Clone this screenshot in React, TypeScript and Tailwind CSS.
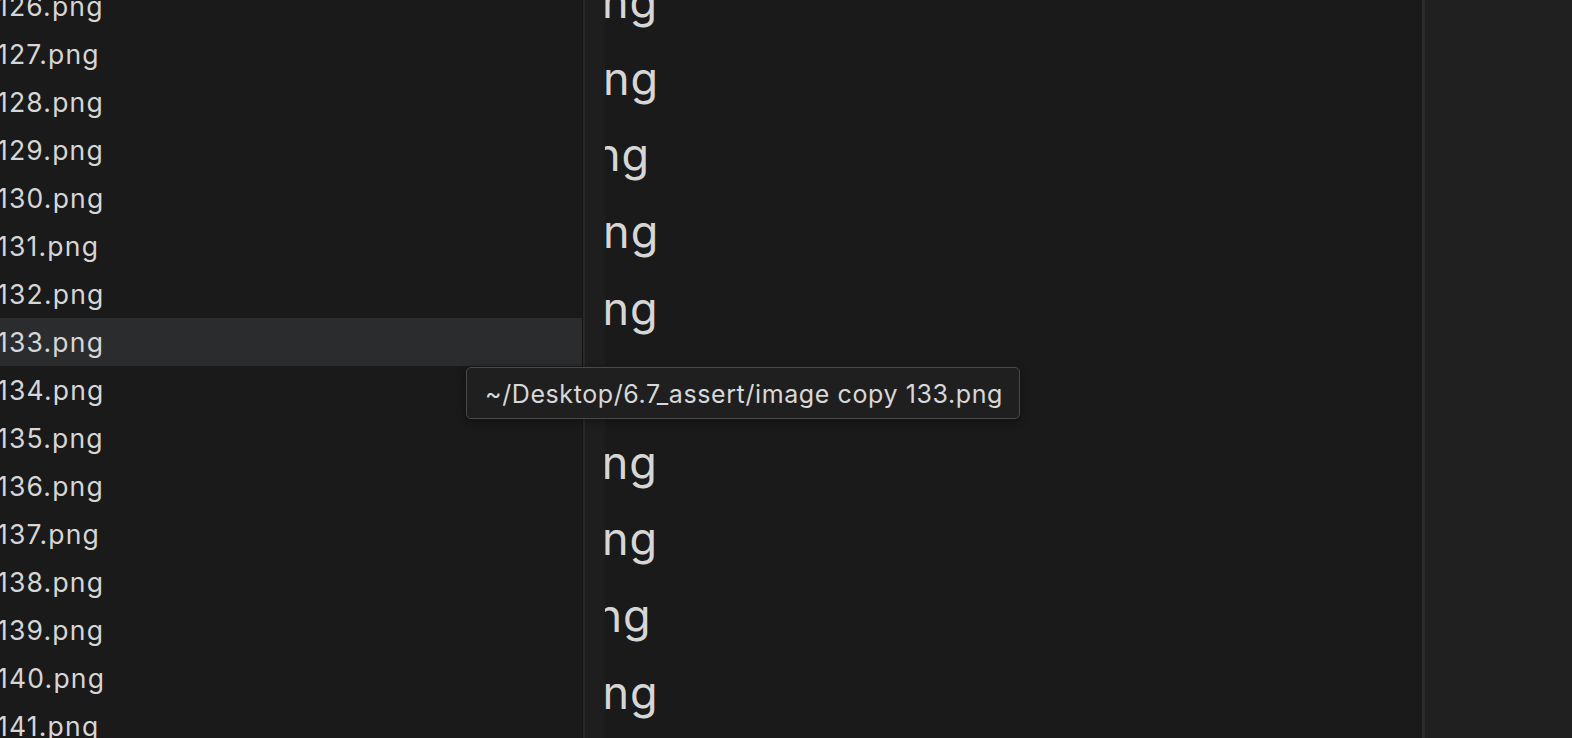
import React from "react";

const leftItems = Array.from({ length: 16 }, (_, i) => 126 + i);
const midItems = Array.from({ length: 11 }, (_, i) => 129 + i);

export default function App() {
  return (
    <div
      className="relative flex h-[738px] w-[1572px] overflow-hidden bg-[#1a1a1a] text-[#d6d6d6]"
      style={{ fontFamily: "Inter, 'Noto Sans', sans-serif" }}
    >
      {/* left list */}
      <div className="relative w-[582px] shrink-0 overflow-hidden bg-[#1a1a1a]">
        <div className="mt-[-18px] flex flex-col">
          {leftItems.map((n) => (
            <div
              key={n}
              className={`flex h-[48px] items-center ${n === 133 ? "bg-[#2b2c2e]" : ""}`}
            >
              <span className="ml-[-3px] mt-[1px] whitespace-nowrap text-[26.5px] leading-none tracking-[1.2px]">
                {n}.png
              </span>
            </div>
          ))}
        </div>
      </div>
      {/* divider */}
      <div className="w-px shrink-0 bg-[#141414]" />
      <div className="w-[2px] shrink-0 bg-[#2a2a2a]" />
      {/* gutter strip */}
      <div className="w-[20px] shrink-0 bg-[#1e1e1e]" />
      {/* middle */}
      <div className="relative w-[817px] shrink-0 overflow-hidden bg-[#1a1a1a]">
        <div className="mt-[-37px] flex flex-col">
          {midItems.map((n) => (
            <div key={n} className="flex h-[76.8px] items-center">
              <span className="ml-[-121px] whitespace-nowrap text-[45px] leading-none tracking-[1px]">
                {n}.png
              </span>
            </div>
          ))}
        </div>
      </div>
      {/* right divider */}
      <div className="w-[3px] shrink-0 bg-[#2c2c2c]" />
      <div className="flex-1 bg-[#202020]" />

      {/* tooltip */}
      <div className="absolute left-[466px] top-[367px] flex h-[52px] w-[554px] items-center rounded-[5px] border border-[#4a4a4a] bg-[#1f1f1f] pl-[18px] shadow-[0_2px_8px_rgba(0,0,0,0.4)]">
        <span className="mt-[2px] whitespace-nowrap text-[25px] leading-none tracking-[0.6px] text-[#d8d8d8]">
          ~/Desktop/6.7_assert/image copy 133.png
        </span>
      </div>
    </div>
  );
}
